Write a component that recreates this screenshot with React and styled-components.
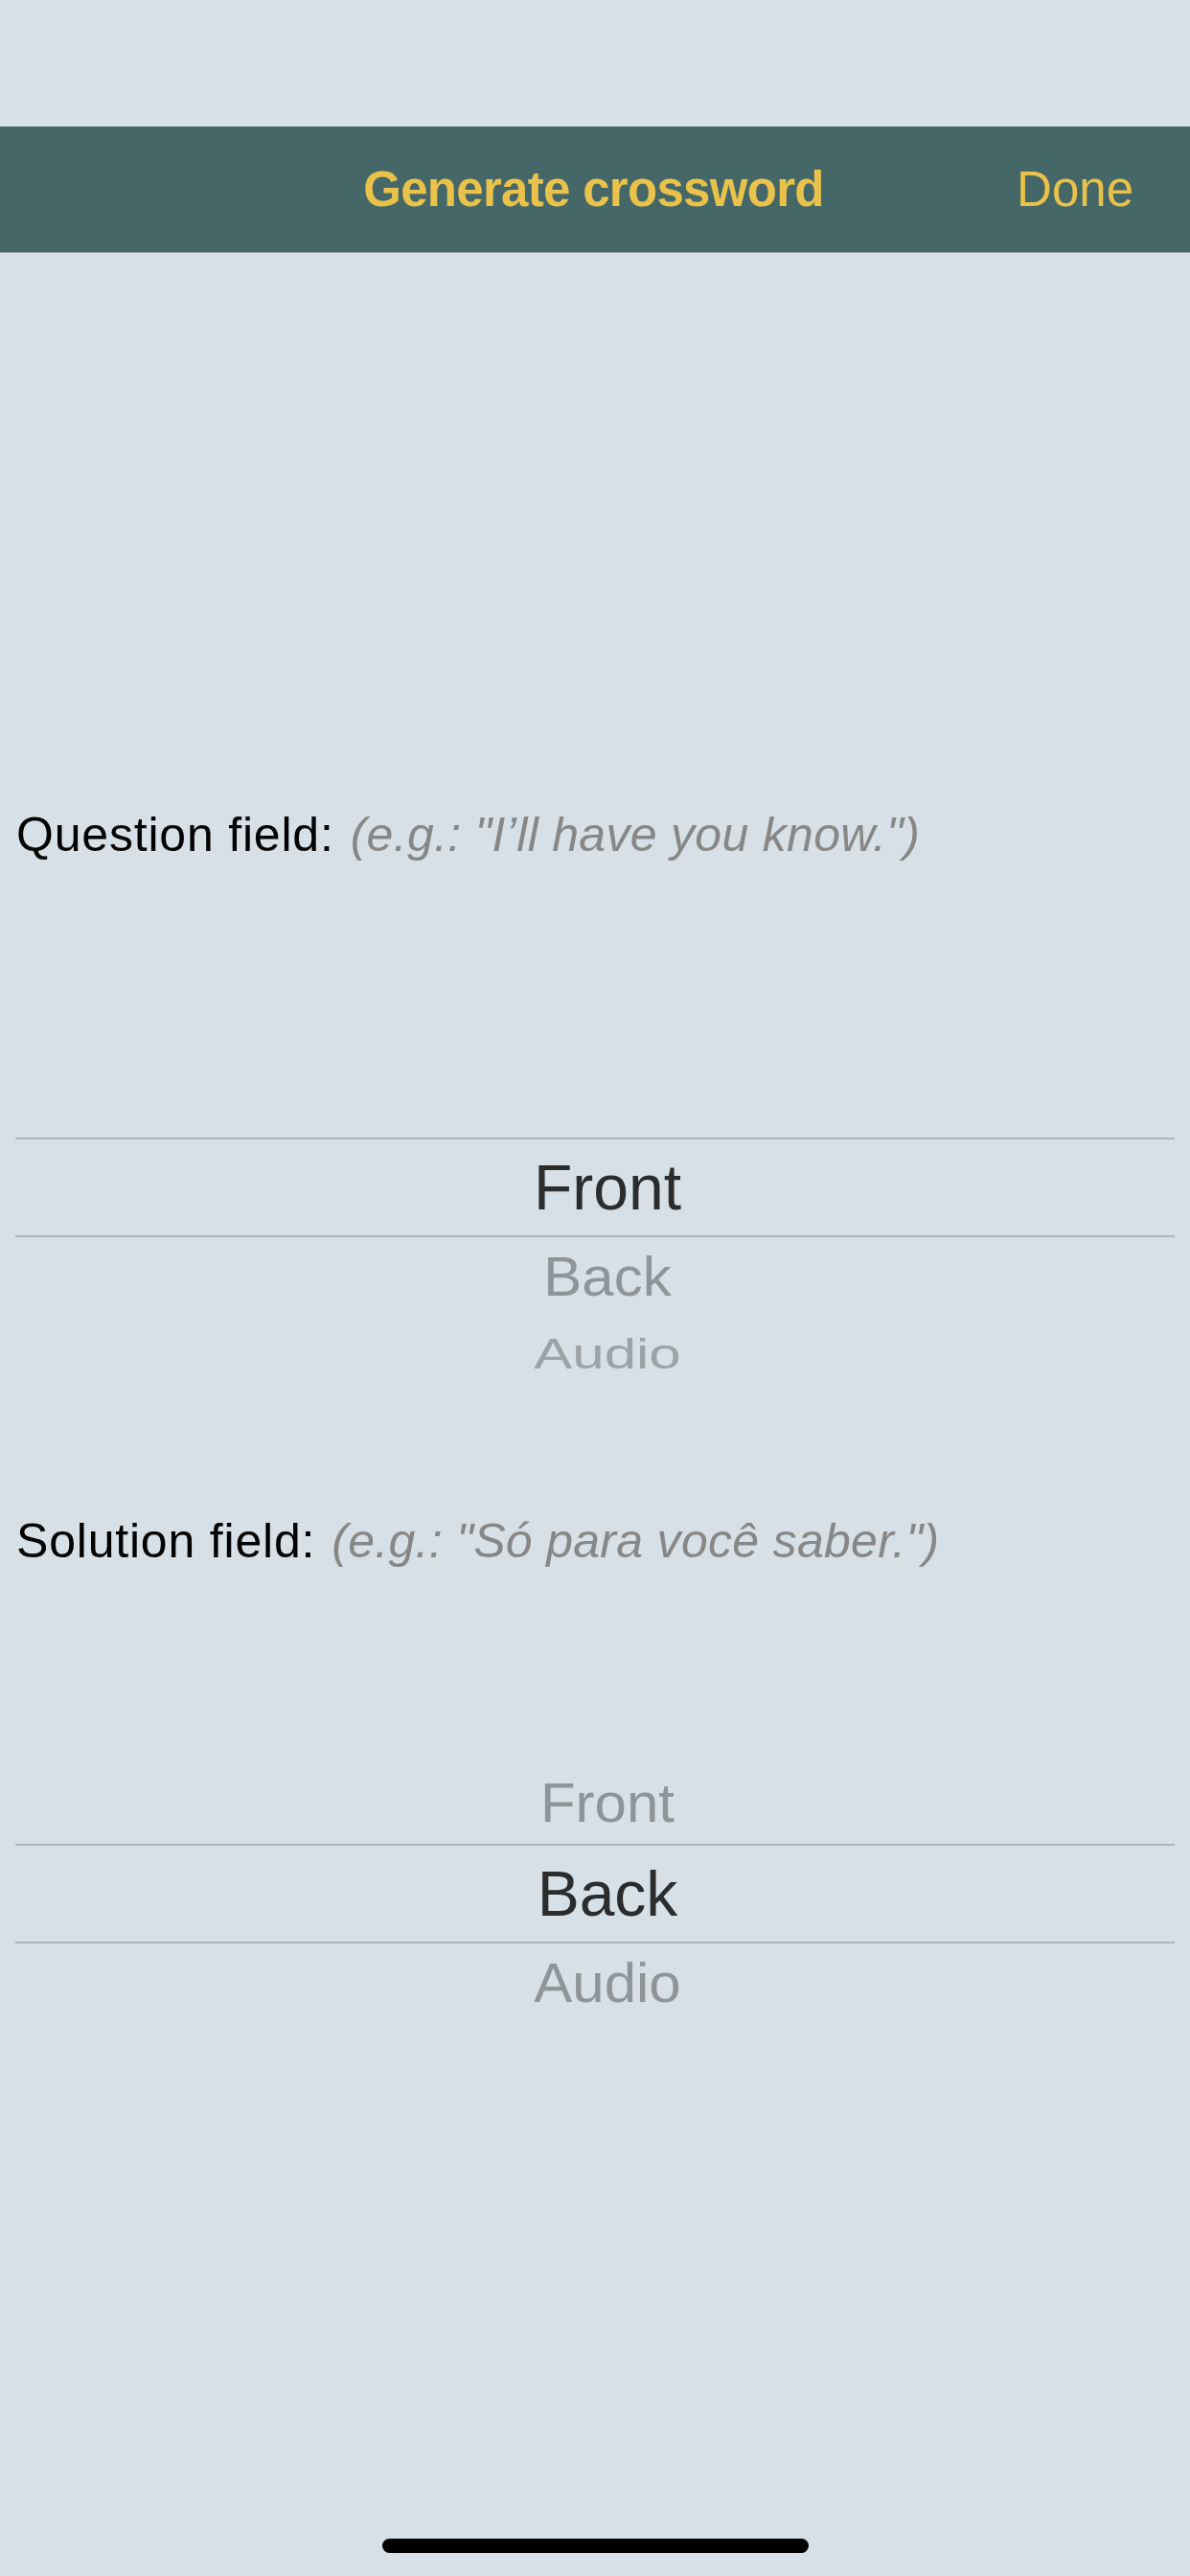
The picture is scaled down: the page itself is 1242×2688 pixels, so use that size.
import React from "react";
import styled, { createGlobalStyle, css } from "styled-components";

const Global = createGlobalStyle`
  html, body { margin: 0; padding: 0; background: #d6e0e6; }
  * { box-sizing: border-box; }
`;

const Page = styled.div`
  width: 1242px;
  height: 2688px;
  display: flex;
  flex-direction: column;
  background: #d6e0e6;
  font-family: "Liberation Sans", Arial, sans-serif;
  overflow: hidden;
`;

const StatusSpace = styled.div`
  height: 132px;
  flex: none;
`;

const NavBar = styled.header`
  height: 132px;
  flex: none;
  background: #466767;
  border-bottom: 1px solid #9aa6a8;
  display: grid;
  grid-template-columns: 1fr auto 1fr;
  align-items: center;
  padding: 0 59px 0 48px;
`;

const NavTitle = styled.h1`
  grid-column: 2;
  margin: 0;
  font-size: 51px;
  font-weight: 700;
  letter-spacing: -0.7px;
  color: #e8c24a;
  line-height: 1;
  transform: translateX(4px);
`;

const NavButton = styled.button`
  grid-column: 3;
  justify-self: end;
  background: none;
  border: 0;
  padding: 0;
  font-family: inherit;
  font-size: 51px;
  font-weight: 400;
  color: #e8c24a;
  line-height: 1;
`;

const Content = styled.main`
  display: flex;
  flex-direction: column;
  gap: 127px;
  padding: 577px 16px 0;
`;

const Section = styled.section`
  display: flex;
  flex-direction: column;
  gap: 126px;
`;

const FieldLabel = styled.p`
  margin: 0;
  padding-left: 1px;
  font-size: 50px;
  line-height: 60px;
  letter-spacing: 0.8px;
  color: #000;
  white-space: nowrap;
`;

const Hint = styled.span`
  font-style: italic;
  color: #878787;
  margin-left: 17px;
  letter-spacing: 0.3px;
`;

const Wheel = styled.div`
  display: grid;
  grid-template-rows: 76px 84px 104px 84px 76px;
`;

const Slot = styled.div`
  display: flex;
  align-items: center;
  justify-content: center;
  padding-left: 26px;
  ${(p) =>
    p.$selected &&
    css`
      border-top: 2px solid #adb7bd;
      border-bottom: 2px solid #adb7bd;
    `}
`;

const depthStyles = {
  0: css`
    font-size: 66px;
    color: #2a2c2e;
  `,
  1: css`
    font-size: 60px;
    color: #8e9497;
    transform: scaleY(0.95);
  `,
  2: css`
    font-size: 60px;
    color: #9ca2a6;
    transform: scaleY(0.75);
  `,
};

const WheelText = styled.span`
  line-height: 1;
  display: inline-block;
  ${(p) => depthStyles[p.$depth]}
`;

const HomeBar = styled.div`
  margin-top: auto;
  margin-bottom: 24px;
  align-self: center;
  width: 445px;
  height: 15px;
  border-radius: 8px;
  background: #000;
`;

function Picker({ items, selected }) {
  const offsets = [-2, -1, 0, 1, 2];
  return (
    <Wheel>
      {offsets.map((o) => {
        const item = items[selected + o];
        return (
          <Slot key={o} $selected={o === 0}>
            {item && <WheelText $depth={Math.abs(o)}>{item}</WheelText>}
          </Slot>
        );
      })}
    </Wheel>
  );
}

const options = ["Front", "Back", "Audio"];

export default function App() {
  return (
    <Page>
      <Global />
      <StatusSpace />
      <NavBar>
        <NavTitle>Generate crossword</NavTitle>
        <NavButton>Done</NavButton>
      </NavBar>
      <Content>
        <Section>
          <FieldLabel>
            Question field:<Hint>(e.g.: "I’ll have you know.")</Hint>
          </FieldLabel>
          <Picker items={options} selected={0} />
        </Section>
        <Section>
          <FieldLabel>
            Solution field:<Hint>(e.g.: "Só para você saber.")</Hint>
          </FieldLabel>
          <Picker items={options} selected={1} />
        </Section>
      </Content>
      <HomeBar />
    </Page>
  );
}
